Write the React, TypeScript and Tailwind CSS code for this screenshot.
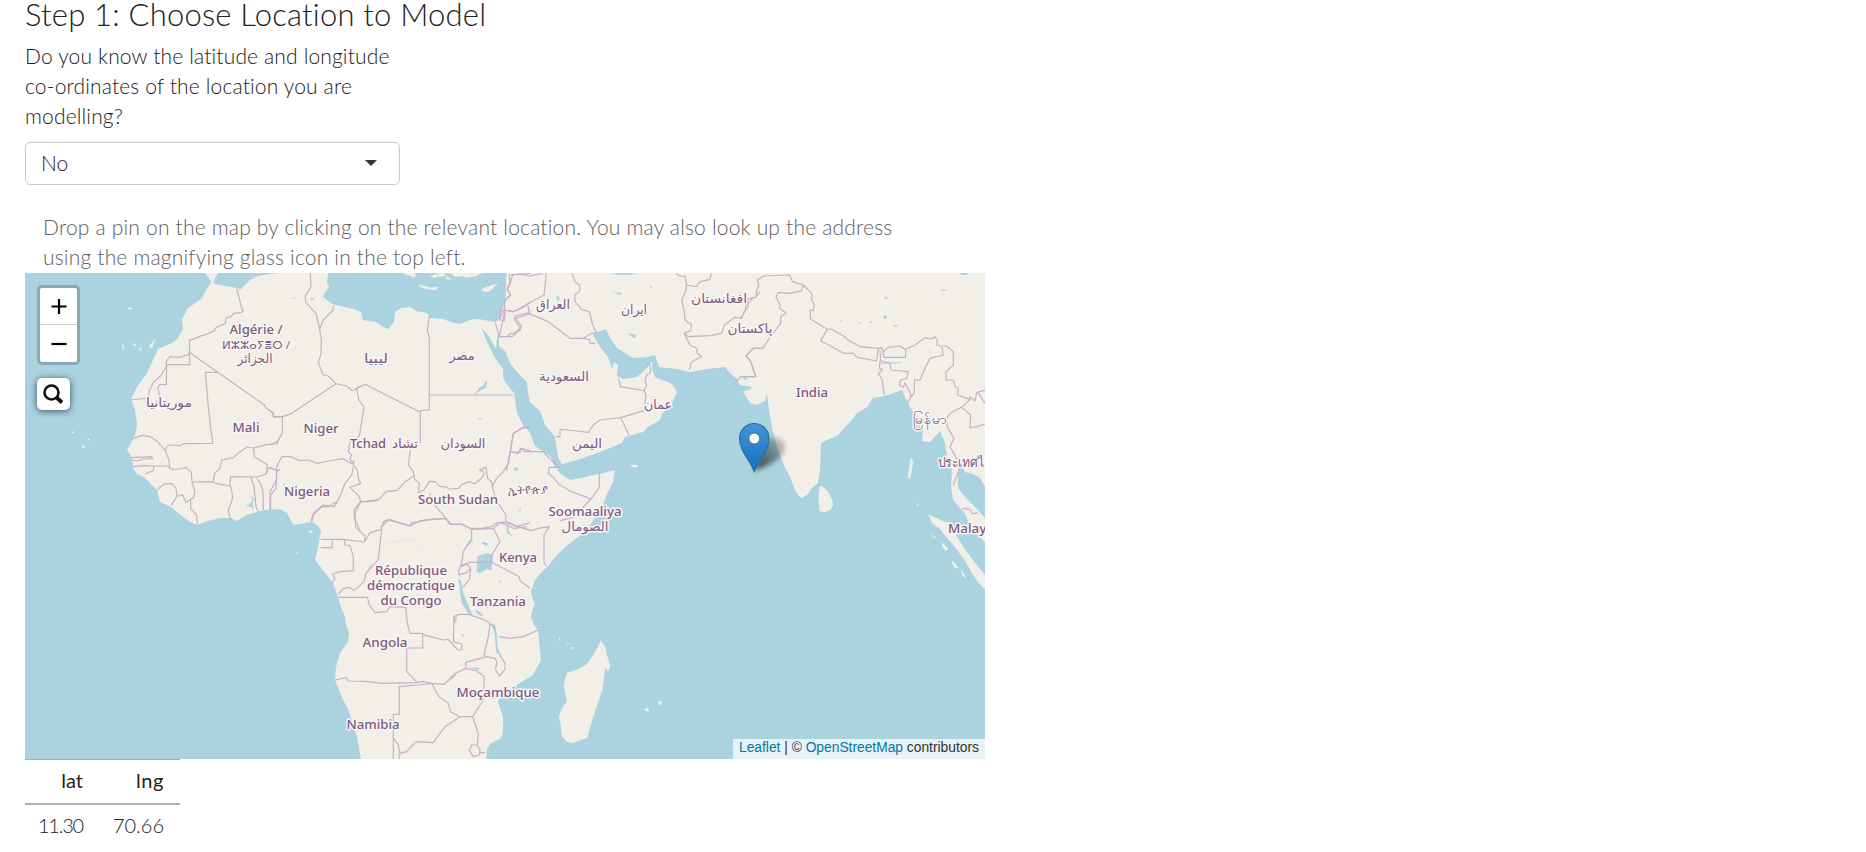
import React from "react";

const LAND =
  "M205 273L211 281L211 283L206 290L202 298L187 309L182 320L183 329L178 338L172 343L158 349L153 360L147 373L142 380L137 387L131 399L135 410L137 423L136 431L134 438L127 450L132 457L133 468L137 474L144 477L150 483L157 490L160 502L171 507L183 517L190 522L197 525L208 521L220 518L231 518L237 521L245 516L253 513L265 510L280 509L287 513L291 521L294 525L305 523L312 522L317 525L321 530L319 542L315 560L323 570L333 583L338 597L341 607L345 617L346 625L349 633L348 642L340 653L336 667L335 680L343 700L347 707L352 720L357 737L361 759L486 759L487 749L490 744L501 738L503 732L503 717L499 705L498 700L510 690L518 684L533 675L541 660L540 650L538 630L534 625L531 617L533 608L535 605L532 597L531 591L535 580L542 572L548 566L557 555L570 543L585 532L595 518L603 505L608 492L613 482L615 470L607 472L590 476L581 478L570 480L562 475L557 470L560 465L580 459L600 452L622 443L625 437L643 432L648 427L660 420L662 414L672 403L677 392L672 384L668 382L662 380L655 377L652 369L652 361L647 368L637 377L623 379L617 376L618 365L614 362L612 369L608 357L600 347L593 335L597 332L606 329L610 338L617 348L625 353L633 358L647 357L655 355L659 367L677 369L690 372L707 369L725 367L730 373L737 379L740 385L752 387L743 392L750 403L757 405L765 401L767 393L769 410L772 427L777 447L783 463L790 477L795 490L799 496L802 498L808 494L812 488L818 483L820 470L821 443L827 440L837 436L850 422L857 413L867 407L873 398L885 396L902 390L907 402L912 410L917 418L923 430L922 441L930 442L940 431L945 443L947 457L952 470L951 487L953 500L962 510L965 514L970 525L985 543V518L975 507L965 497L958 488L958 470L962 465L965 472L973 474L980 478L985 487V273Z";

const MED =
  "M213 282L218 273H450L455 277L475 275L482 272L507 272L506 280L506 291L505 301L502 310L500 319L496 322L489 321L484 320L477 319L470 320L460 324L451 322L443 319L430 318L427 313L416 311L410 307L401 308L395 312L394 322L388 329L383 327L376 322L363 320L361 312L354 309L340 306L332 304L323 297L325 292L329 287L327 282L328 273H282L270 274L258 276L250 280L241 289L226 286L215 284Z";

const RED_SEA =
  "M482 328L490 338L496 349L497 337L499 335L499 346L505 351L510 363L518 373L527 382L528 393L530 402L540 411L545 425L555 437L558 457L562 465L555 468L551 457L535 446L530 433L523 425L517 413L514 393L505 382L503 377L503 369L495 358L487 342Z";

const BORDERS_A =
  "M650 55L658 85L664 112L670 122L662 128L640 130L635 138L618 145L616 160L588 173L583 182L560 193L545 197L508 212L509 284H440L439 344H420L414 352L418 378M509 245L518 254L732 404L738 414L760 428L761 441H780M592 307H556L566 420L573 485L579 520L490 521L480 527L450 525L440 530L436 542L410 512L390 500L365 496L342 505M509 245L505 254L480 262L450 260L440 272L438 290L425 315L400 338L388 362L385 384L332 390M336 563L395 560L398 566L370 567L350 573L336 570M338 590L370 587L402 588L440 588L449 593M436 542L447 570L449 593L462 600L498 592L514 607L516 636L580 635L585 640L630 648M402 588L400 602L375 612M410 662L430 643L455 640L468 655L471 678L478 678L488 674L498 698L508 690L520 684L525 668L516 636M471 678L454 706M512 690L512 715L530 735L532 764M630 648L632 620L712 621L738 612L742 584L703 560L700 534M580 632L584 610L600 595L605 570L640 563L660 545L683 531L700 534L740 524L770 522L780 500M632 648L638 680L633 700L625 720L632 752M693 623L702 650L708 710L718 732M710 625L722 640L729 665L730 720M752 720V675L768 655L770 600L748 592L738 612M770 605L780 598";

const BORDERS_B =
  "M121 10L123 50L105 80L108 98L138 130L149 177L154 210L153 250L145 280L160 315L175 318L198 341L65 430L38 440L10 440L8 428L0 424M190 108L189 120L160 150L149 177M198 341L230 348L247 362L285 343L451 427M285 343L260 354L267 390L282 412L268 498L240 515L235 545L245 555L240 568L262 600L265 625L272 640L240 652L268 680L272 696M451 520V422L478 419V204L472 182L478 138M478 375H730M37 440V490L22 515L0 524M0 720V665L20 630V590L35 560L62 560L88 572L115 570L142 580L175 573L220 566L235 575L250 583M0 593L20 602M250 590L245 615L225 640L210 680L193 710L160 705L130 730L123 755M272 696L328 688L348 665L382 661L405 635L431 618M421 540L415 585L430 605L434 628L448 640L445 668L462 660L478 634L495 635L510 650L525 650L540 657L566 655L575 643L600 635L613 642L634 625L642 615L640 605L628 600L648 592L653 625L665 635L667 650L678 690L708 735L708 756L720 758L740 770L780 758M478 670L498 710L528 745L480 748L450 755L425 758L418 768L355 750L340 765L330 770M272 696L252 720L254 748L270 780M780 470L758 475L730 490L721 545L745 550L752 535L780 542M721 545L715 580L700 605L680 625L667 650M708 756L682 758L665 770L635 775L600 775L575 762L540 763L528 745M780 95L760 112L730 125L705 120M780 130L775 115M688 200H710L723 190L728 193L742 182L755 170L742 152L735 138L780 128M676 158L688 200L705 120L703 100L710 85L722 75L712 55L720 40L728 15L780 10M692 120L690 150L703 152L705 122Z";

const BORDERS_C =
  "M0 145L12 120L15 90L32 75L22 60L30 40L28 15L60 12L90 18L128 10M12 120L40 125L82 102L132 75L136 40L138 10M82 102L90 132L145 155L210 205H250L275 190L290 188M250 205L270 210V220H285M216 10L225 35L238 45L240 62L225 75L225 95L245 118L268 125L278 165L290 188M90 132L42 146L58 170L62 177L38 200H0M355 325L362 350L432 362L440 345L435 335L440 315L452 307L450 285L440 280M432 362L438 375L432 422L362 443L387 495M362 443L300 450L280 465L265 487L205 480L180 478V500H168M20 602L30 547H60L62 535L75 545L130 545L145 562L170 585L177 592M30 547L40 490L75 468M177 592L148 592L145 610L160 622L175 642L215 665L273 687L298 652V610M273 687L220 742L180 752M0 757L42 775L80 770M528 10L540 18L555 20L560 45L555 68L545 90L552 120L555 150L575 165L572 182L552 190L570 225L590 235L592 250L605 260L575 275L568 300M560 45L590 50L600 35L630 28L634 10M552 190L565 200L632 197L665 190L673 165L705 142L725 145L732 125L745 110L742 87L765 82L780 65M780 235H760L738 257L752 275L767 320H722L710 334";

const BORDERS_D =
  "M0 145L15 125L18 105L30 95L35 85L48 82L50 60L57 48L52 30L70 18L148 15L158 35L190 45L215 70L215 90L223 105L220 122L210 120L212 148L262 178L242 212L312 250L340 250L352 262L410 273L415 235L360 230L325 210L310 198L275 177L262 178M190 45L185 62L150 70L115 67L108 82L120 105L118 115L138 128L122 140L122 160L95 195L68 235H40L18 258L32 275L48 320H0M415 235L425 233L430 245L445 232L480 228L497 240V262H432L428 245M420 240L422 273L450 280L453 300L505 305L500 325L482 330L478 345L490 352L495 338L513 375L510 390L503 390L505 405M420 273L418 295L428 298L415 312L425 325L433 375M497 238L525 225L555 203L575 207L585 200L592 210L590 225L605 228L610 255L570 265L555 295L540 330L524 330L522 370L513 382M610 228H620L640 245L640 285L618 305V330H640L645 350L655 355L652 375L690 388L690 380L705 392L710 368L735 360M690 388L665 412L630 430L620 445L622 470L642 505L630 530L655 575L658 598L640 645M665 412L692 435L690 473L710 470L735 462M715 368L735 400M668 715L690 718L698 732L712 728";

const BORDERS_E =
  "M65 65L72 42L95 20L115 20L140 5M212 5L195 40L197 82L225 108L224 125L240 98L275 88L280 65L298 58L360 78L390 62L465 55L485 73H515L545 88L610 85L630 68H648L700 85L725 92L745 85L780 80M210 5L240 5L265 0M275 88L265 178L228 220L222 245L192 272L178 262L160 265L145 282M92 118H160L224 126M92 143H127V118M163 118L165 135L180 137L190 170V212L150 215L128 222L135 238L122 250M145 292H232L238 315L255 338L290 335L300 320L347 322L352 370L360 400H398V444H350V515L382 548L280 550L225 544L175 543L170 533L136 540M398 404L430 412L460 420L475 418L503 450H515V432L490 425L492 350L508 343H540M382 548L400 544L425 550L463 553L495 520L528 505L527 487L590 470L582 465L595 410L600 370L580 358L540 345M328 777V760M310 777V643H328V560L385 555L425 550L447 590L475 610L482 635L510 650H548L580 600L583 530L560 512L528 505M510 650L465 680L430 728L378 725L350 755L330 760L325 735L310 713M548 650L565 700L562 735L545 735L538 752L550 770L568 765L570 750L562 735M570 758L585 758M545 88V115L520 155L515 190L505 215L510 230M610 85L630 125L605 165V187H540L515 200M605 187L688 230L690 242L720 265M508 200L530 190L542 205L530 218L505 225M542 205L538 240L518 262M600 370L615 385M590 470L615 475L620 485L617 510L628 528L645 508L645 490L628 462M628 410L660 415L700 410L745 390M778 80L762 105V188L770 198";

const WATER_E =
  "M562 168L588 160L608 163L605 210L590 208L570 220L560 215ZM505 235L512 240L520 280L548 348L535 340L515 310ZM605 370L615 375L620 400L622 440L635 470L618 455L614 400ZM648 70L655 75V92L668 112L652 100ZM530 140L540 122L552 120ZM575 125L595 130L590 138L578 132ZM490 350H502L498 368L490 365ZM463 553L495 522L500 525L475 545ZM558 328L580 345L572 348L560 338ZM535 502L578 504L560 508ZM515 405L525 400L518 412ZM625 245L638 240L630 248ZM228 220L240 196L246 192L234 212Z";

const ISLANDS_FULL =
  "M419 285L425 286L430 288L438 287L436 290L427 289L420 287ZM482 289L487 287L493 285L497 284L491 290L488 292L483 291ZM820 486L823 487L828 492L832 500L833 505L830 510L825 512L820 511L819 503L819 493ZM929 515L934 517L942 521L950 523L955 534L964 548L974 562L985 575V589L979 583L972 573L965 560L958 551L950 541L940 529L932 523ZM601 641L605 647L607 656L610 666L608 671L605 667L604 677L602 690L597 705L592 720L587 738L580 740L573 743L566 741L562 736L561 725L559 717L562 709L567 701L564 686L567 673L577 670L586 665L593 656L598 647ZM645 709L648 708L649 711L646 711ZM659 701L662 702L661 705L659 704ZM631 465L637 465L638 467L632 467ZM911 458L913 462L910 479L908 477ZM943 543L948 549L946 551L942 546ZM953 561L958 568L955 568L952 563ZM932 535L936 538L933 537ZM961 570L966 578L963 576ZM123 344L124 350L122 346ZM133 343L136 345L134 346ZM149 347L155 339L152 348ZM139 349L142 348L140 351ZM72 431L74 433L72 433ZM82 446L85 447L83 448ZM88 438L90 440L88 440ZM128 308H132L130 310ZM399 269L406 275L412 276L416 273ZM297 552L298 553L297 554ZM309 530L313 532L310 533ZM559 637L560 641L559 639ZM567 643L569 644L567 644ZM571 647L574 648L572 649ZM917 503L919 506L917 505Z";

const PONDS =
  "M611 273L637 273L630 275L618 275ZM613 292L622 293L620 295ZM650 286L653 287L650 288ZM628 333L636 335L635 338L632 337ZM556 295L560 298L558 302ZM479 388L484 385L485 381L487 382L486 388L481 390L476 394L474 395L477 391ZM249 495L253 499L251 503L246 506L251 507L253 510L253 501L255 499ZM514 468L518 467L518 470L515 471ZM519 511L522 506L520 512ZM352 461L355 460L355 464L353 463ZM478 418L482 418L480 420ZM883 317L886 315L887 318L884 319ZM857 322L862 323L859 324ZM892 325L898 325L896 327ZM868 322L872 321L872 323ZM940 289L948 290L943 291ZM884 296L889 298L886 299ZM960 273L968 273L967 275L962 275ZM840 319L843 321L841 322ZM879 363L901 362L901 363L880 364ZM926 352L931 350L928 352ZM283 485L285 483L284 487ZM311 297L315 297ZM310 299L314 298L314 300L310 300ZM294 297L295 297L295 299L293 298ZM500 273L502 276L500 277Z";

const frames: { t: string; d: string }[] = [
  { t: "translate(20 270) scale(.33333)", d: BORDERS_A },
  { t: "translate(270 270) scale(.33333)", d: BORDERS_B },
  { t: "translate(500 270) scale(.33333)", d: BORDERS_C },
  { t: "translate(740 270) scale(.33333)", d: BORDERS_D },
  { t: "translate(290 500) scale(.33333)", d: BORDERS_E },
];

const labels: { x: number; y: number; w: number; t: string; s?: number }[] = [
  { x: 256, y: 334, w: 53, t: "Algérie /" },
  { x: 256, y: 349, w: 68, t: "ⵍⵣⵣⴰⵢⴻⵔ /", s: 11.5 },
  { x: 255, y: 363, w: 35, t: "الجزائر" },
  { x: 169, y: 407, w: 46, t: "موريتانيا" },
  { x: 246, y: 432, w: 27, t: "Mali" },
  { x: 321, y: 433, w: 35, t: "Niger" },
  { x: 376, y: 363, w: 24, t: "ليبيا" },
  { x: 462, y: 360, w: 25, t: "مصر" },
  { x: 368, y: 448, w: 36, t: "Tchad" },
  { x: 405, y: 448, w: 26, t: "تشاد" },
  { x: 463, y: 448, w: 45, t: "السودان" },
  { x: 307, y: 496, w: 46, t: "Nigeria" },
  { x: 458, y: 504, w: 80, t: "South Sudan" },
  { x: 528, y: 494, w: 40, t: "ኢትዮጵያ" },
  { x: 553, y: 309, w: 34, t: "العراق" },
  { x: 634, y: 314, w: 26, t: "ايران" },
  { x: 719, y: 303, w: 56, t: "افغانستان" },
  { x: 750, y: 333, w: 45, t: "پاکستان" },
  { x: 564, y: 381, w: 50, t: "السعودية" },
  { x: 658, y: 409, w: 28, t: "عمان" },
  { x: 587, y: 448, w: 30, t: "اليمن" },
  { x: 585, y: 516, w: 73, t: "Soomaaliya" },
  { x: 585, y: 531, w: 47, t: "الصومال" },
  { x: 518, y: 562, w: 38, t: "Kenya" },
  { x: 411, y: 575, w: 72, t: "République" },
  { x: 411, y: 590, w: 88, t: "démocratique" },
  { x: 411, y: 605, w: 61, t: "du Congo" },
  { x: 498, y: 606, w: 56, t: "Tanzania" },
  { x: 385, y: 647, w: 45, t: "Angola" },
  { x: 498, y: 697, w: 83, t: "Moçambique" },
  { x: 373, y: 729, w: 53, t: "Namibia" },
  { x: 812, y: 397, w: 32, t: "India" },
  { x: 930, y: 424, w: 34, t: "မြန်မာ" },
  { x: 969, y: 467, w: 63, t: "ประเทศไทย" },
  { x: 976, y: 533, w: 56, t: "Malaysia" },
];

function MapDrawing() {
  return (
    <svg className="block h-[486px] w-[960px]" viewBox="25 273 960 486">
      <rect x="25" y="273" width="960" height="486" fill="#aad3df" />
      <path d={LAND} fill="#f2efe9" />
      <path d={MED} fill="#aad3df" />
      <path d={RED_SEA} fill="#aad3df" />
      <path d={ISLANDS_FULL} fill="#f2efe9" stroke="#f2efe9" strokeWidth=".5" strokeLinejoin="round" />
      <path
        d="M410 273L413 278L417 275ZM430 276L436 278L440 273ZM447 276L452 280L446 279ZM437 273H443L446 276L439 277ZM458 273L466 278L476 276L482 273Z"
        fill="#f2efe9"
      />
      <path d={PONDS} fill="#aad3df" />
      <path d="M740 386L746 389L752 387L749 390L743 391ZM743 376L748 379L744 380Z" fill="#aad3df" />
      <g transform="translate(290 500) scale(.33333)">
        <path d={WATER_E} fill="#aad3df" />
        <path d="M265 180V155L290 130L345 120L375 122L400 148L430 162" fill="none" stroke="#e0e9e6" strokeWidth="3" />
      </g>
      {frames.map((f) => (
        <g key={f.t} transform={f.t}>
          <path d={f.d} fill="none" stroke="#c8b0c6" strokeWidth="3.6" strokeLinejoin="round" />
        </g>
      ))}
      {labels.map((l) => (
        <text
          key={l.t}
          x={l.x}
          y={l.y}
          textAnchor="middle"
          textLength={l.w}
          lengthAdjust="spacingAndGlyphs"
          fontSize={l.s ?? 13}
          fontWeight={/[a-z]/.test(l.t) ? 500 : 400}
          fontFamily="'Noto Sans', 'DejaVu Sans', sans-serif"
          fill="#7d5a80"
          stroke="#f8f5f3"
          strokeWidth="3"
          strokeLinejoin="round"
          paintOrder="stroke"
        >
          {l.t}
        </text>
      ))}
    </svg>
  );
}

function Pin() {
  return (
    <svg className="absolute left-[709px] top-[146px] h-[60px] w-[66px]" viewBox="0 0 66 60">
      <defs>
        <linearGradient id="pinFill" x1="0" y1="0" x2="0" y2="1">
          <stop offset="0" stopColor="#4595d3" />
          <stop offset="1" stopColor="#126fc6" />
        </linearGradient>
        <linearGradient id="shade" x1="0" y1="1" x2="1" y2="0">
          <stop offset="0" stopColor="#000" stopOpacity=".7" />
          <stop offset="1" stopColor="#000" stopOpacity=".12" />
        </linearGradient>
        <filter id="soft" x="-40%" y="-40%" width="180%" height="180%">
          <feGaussianBlur stdDeviation="2.4" />
        </filter>
      </defs>
      <path d="M20 52L30 24Q38 16 47 20Q56 27 47 37Q40 45 20 52Z" fill="url(#shade)" filter="url(#soft)" />
      <path
        d="M20.300 52.500C16 41 5.500 32 5.500 19.500A14.700 15 0 0 1 35 19.500C35 32 24.500 41 20.300 52.500Z"
        fill="url(#pinFill)"
        stroke="#2e6c97"
        strokeWidth="1.100"
      />
      <circle cx="20.300" cy="19.500" r="5.400" fill="#fff" stroke="#2e6c97" strokeWidth=".8" />
    </svg>
  );
}

function MapControls() {
  return (
    <>
      <div className="absolute left-3 top-3 flex h-20 w-[43px] flex-col rounded-[5px] border-[3px] border-black/20 bg-white bg-clip-padding">
        <button className="flex h-[37px] items-center justify-center border-b border-[#ccc]">
          <svg className="h-4 w-4" viewBox="0 0 16 16" stroke="#000" strokeWidth="2.200">
            <path d="M.5 8.500H15.500M8 1V16" />
          </svg>
        </button>
        <button className="flex flex-1 items-center justify-center">
          <svg className="h-4 w-4" viewBox="0 0 16 16" stroke="#000" strokeWidth="2.200">
            <path d="M.5 8H15.500" />
          </svg>
        </button>
      </div>
      <button className="absolute left-3 top-[105px] flex h-8 w-[33px] items-center justify-center rounded-[5px] bg-white pr-px shadow-[0_1px_7px_rgba(0,0,0,0.65)]">
        <svg className="h-[22px] w-[22px]" viewBox="0 0 22 22" fill="none" stroke="#111">
          <circle cx="9.500" cy="9.500" r="7" strokeWidth="2.600" />
          <path d="M14.500 14.500L20 19.500" strokeWidth="3.800" />
        </svg>
      </button>
    </>
  );
}

export default function App() {
  return (
    <main className="h-[852px] w-full overflow-hidden bg-white pl-[25px] font-['Lato','Open_Sans',sans-serif] text-[21px] font-light leading-[30px] text-[#212121]">
      <h4 className="h-[41px] text-[31px] leading-[28px] tracking-[0.2px]">Step 1: Choose Location to Model</h4>
      <div className="flex w-[375px] flex-col">
        <label className="whitespace-nowrap tracking-[0.15px]">
          Do you know the latitude and longitude
          <br />
          co-ordinates of the location you are
          <br />
          modelling?
        </label>
        <div className="mt-[11px] flex h-[43px] items-center justify-between rounded-[5px] border border-[#c8c8c8] pb-[2px] pl-[15px] pr-[22px]">
          <span>No</span>
          <svg className="h-[6px] w-3" viewBox="0 0 12 6">
            <path d="M0 0H12L6 6Z" fill="#333" />
          </svg>
        </div>
      </div>
      <p className="mt-[27px] h-[61px] whitespace-nowrap pl-[18px] tracking-[0.19px] text-[#606060]">
        Drop a pin on the map by clicking on the relevant location. You may also look up the address
        <br />
        using the magnifying glass icon in the top left.
      </p>
      <section className="relative h-[486px] w-[960px] overflow-hidden">
        <MapDrawing />
        <Pin />
        <MapControls />
        <div className="absolute bottom-0 right-0 flex h-5 w-[252px] items-center justify-between whitespace-nowrap bg-white/70 px-[6px] pb-[2px] font-['Liberation_Sans',sans-serif] text-[13.8px] font-normal leading-[18px] text-[#333]">
          <a className="text-[#0078a8]">Leaflet</a>
          <span>|</span>
          <span>©</span>
          <a className="text-[#0078a8]">OpenStreetMap</a>
          <span>contributors</span>
        </div>
      </section>
      <table className="w-[155px] table-fixed border-collapse text-right text-[20px]">
        <thead>
          <tr className="h-[44px] border-b-2 border-t border-b-[#b0b0b0] border-t-[#aaa]">
            <th className="w-[74px] pb-[2px] pr-4 font-normal">lat</th>
            <th className="pb-[2px] pr-4 font-normal tracking-[0.6px]">lng</th>
          </tr>
        </thead>
        <tbody>
          <tr className="h-[44px]">
            <td className="pb-[2px] pr-4 tracking-[-1.2px]">11.30</td>
            <td className="pb-[2px] pr-4">70.66</td>
          </tr>
        </tbody>
      </table>
    </main>
  );
}
